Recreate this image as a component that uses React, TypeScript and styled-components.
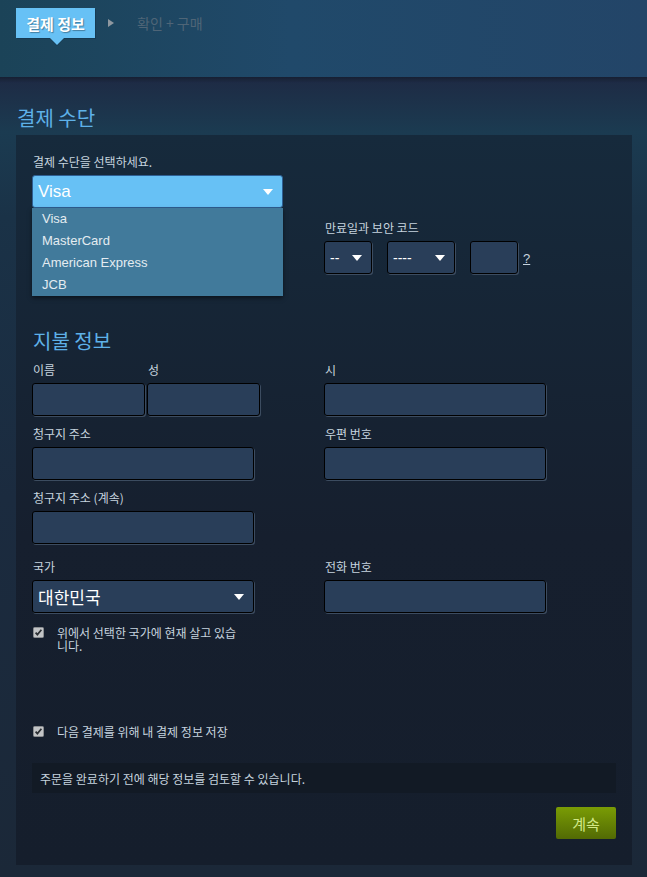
import { FC, ReactNode } from "react";
import styled, { createGlobalStyle } from "styled-components";

const KR = `"Noto Sans CJK KR", "Liberation Sans", Arial, sans-serif`;
const LATIN = `"Liberation Sans", Arial, "Noto Sans CJK KR", sans-serif`;

const GlobalStyle = createGlobalStyle`
    html, body {
        margin: 0;
        padding: 0;
        background: #1b2838;
        font-family: ${KR};
    }
    * {
        box-sizing: border-box;
    }
`;

const Header = styled.header`
    height: 77px;
    padding: 8px 16px 0;
    background: linear-gradient(90deg, #1b4358 0%, #20496a 45%, #234568 100%);
`;

const Steps = styled.div`
    display: flex;
    align-items: center;
`;

const ActiveStep = styled.div`
    position: relative;
    width: 79px;
    height: 30px;
    display: flex;
    align-items: center;
    justify-content: center;
    background: #67c1f5;
    color: #ffffff;
    font-size: 15px;
    font-weight: bold;
    text-shadow: 1px 1px 1px rgba(0, 0, 0, 0.35);
    box-shadow: 1px 1px 0 #163a52;

    &::after {
        content: "";
        position: absolute;
        left: 34px;
        bottom: -7px;
        border-left: 7px solid transparent;
        border-right: 7px solid transparent;
        border-top: 7px solid #67c1f5;
        filter: drop-shadow(0 1px 0 #163a52);
    }
`;

const StepArrow = styled.span`
    margin: 0 0 0 13px;
    width: 0;
    height: 0;
    border-top: 4.5px solid transparent;
    border-bottom: 4.5px solid transparent;
    border-left: 6px solid #8f98a0;
`;

const Step = styled.span`
    margin-left: 23px;
    color: #4f6577;
    font-size: 14px;
`;

const Page = styled.main`
    padding: 29px 15px 12px 16px;
    min-height: 800px;
    background:
        linear-gradient(180deg, rgba(0, 0, 0, 0.25) 0px, rgba(0, 0, 0, 0) 6px),
        linear-gradient(180deg, #1e2a44 0px, #1b3b51 55px, #1a3247 140px, #1b2b3f 420px, #1b2838 100%);
`;

const PageTitle = styled.h2`
    margin: 0 0 5px 1px;
    font-size: 20px;
    line-height: 24px;
    font-weight: normal;
    color: #5eb1e8;
`;

const Panel = styled.section`
    padding: 19px 16px 26px;
    background: linear-gradient(180deg, #162a3c 0%, #161f2e 55%, #151e2c 100%);
`;

const SubTitle = styled.h3`
    margin: 55px 0 9px 1px;
    font-size: 20px;
    line-height: 24px;
    font-weight: normal;
    color: #5eb1e8;
`;

const Row = styled.div<{ $gap?: number }>`
    display: grid;
    grid-template-columns: 292px 1fr;
    margin-top: ${({ $gap }) => $gap ?? 10}px;
`;

const Pair = styled.div`
    display: flex;
    gap: 2px;
`;

const FieldBox = styled.div`
    display: flex;
    flex-direction: column;
`;

const Label = styled.label`
    display: block;
    height: 16px;
    margin: 0 0 5px 1px;
    font-size: 12px;
    line-height: 16px;
    color: #c6d4df;
    white-space: nowrap;
`;

const Input = styled.div<{ $w: number }>`
    width: ${({ $w }) => $w}px;
    height: 33px;
    background: #293e59;
    border: 1px solid #000000;
    border-radius: 3px;
    box-shadow: 1px 1px 0 0 #3c4c60;
`;

const DownArrow = styled.span`
    width: 0;
    height: 0;
    border-left: 5px solid transparent;
    border-right: 5px solid transparent;
    border-top: 6px solid #ffffff;
`;

const Select = styled.div<{ $w: number; $active?: boolean; $small?: boolean }>`
    width: ${({ $w }) => $w}px;
    height: 33px;
    display: flex;
    align-items: center;
    justify-content: space-between;
    padding: 0 9px 0 5px;
    background: ${({ $active }) => ($active ? "#67c1f5" : "#293e59")};
    border: 1px solid ${({ $active }) => ($active ? "#2e5f93" : "#000000")};
    border-radius: 3px;
    box-shadow: 1px 1px 0 0 ${({ $active }) => ($active ? "transparent" : "#3c4c60")};
    color: #ffffff;
    font-size: ${({ $small }) => ($small ? "14px" : "17px")};
    font-family: ${({ $small }) => ($small ? LATIN : KR)};
`;

const SelectValue = styled.span<{ $latin?: boolean }>`
    font-family: ${({ $latin }) => ($latin ? LATIN : KR)};
    line-height: 20px;
`;

const SelectWrap = styled.div`
    position: relative;
    width: 251px;
`;

const Dropdown = styled.ul`
    position: absolute;
    left: 0;
    top: 33px;
    z-index: 2;
    width: 251px;
    margin: 0;
    padding: 0;
    list-style: none;
    background: #417a9b;
    box-shadow: 0 2px 4px rgba(0, 0, 0, 0.5);
`;

const Option = styled.li`
    height: 22px;
    padding: 0 10px;
    font-family: ${LATIN};
    font-size: 13px;
    line-height: 22px;
    color: #e4ecf1;
`;

const ExpiryRow = styled.div`
    display: flex;
    align-items: flex-end;
    gap: 15px;
`;

const Help = styled.span`
    margin-left: -10px;
    margin-bottom: 8px;
    font-family: ${LATIN};
    font-size: 13px;
    color: #c6d4df;
    text-decoration: underline;
`;

const CheckRow = styled.div<{ $gap: number }>`
    display: flex;
    align-items: flex-start;
    margin-top: ${({ $gap }) => $gap}px;
    padding-left: 1px;
`;

const CheckText = styled.span<{ $w?: number }>`
    width: ${({ $w }) => ($w ? `${$w}px` : "auto")};
    margin-left: 13px;
    font-size: 12px;
    line-height: 13px;
    color: #c6d4df;
`;

const Notice = styled.div`
    margin-top: 25px;
    height: 30px;
    padding: 0 8px;
    display: flex;
    align-items: center;
    background: #121a25;
    font-size: 12px;
    color: #c6d4df;
`;

const Actions = styled.div`
    display: flex;
    justify-content: flex-end;
    margin-top: 14px;
`;

const ContinueButton = styled.button`
    width: 60px;
    height: 32px;
    border: none;
    border-radius: 2px;
    background: linear-gradient(180deg, #7a9c05 0%, #526a04 100%);
    color: #d2e885;
    font-family: ${KR};
    font-size: 15px;
    cursor: pointer;
`;

const CheckBox: FC = () => (
    <svg width="11" height="11" viewBox="0 0 11 11" style={{ marginTop: 1, flex: "none" }}>
        <rect x="0.5" y="0.5" width="10" height="10" rx="1" fill="#c2c4c6" stroke="#8a8d90" />
        <path d="M2.6 5.6 L4.4 7.6 L8.4 2.8" fill="none" stroke="#2b2f33" strokeWidth="1.7" />
    </svg>
);

const Field: FC<{ label?: string; children: ReactNode }> = ({ label, children }) => (
    <FieldBox>
        <Label>{label}</Label>
        {children}
    </FieldBox>
);

const App: FC = () => (
    <>
        <GlobalStyle />
        <Header>
            <Steps>
                <ActiveStep>결제 정보</ActiveStep>
                <StepArrow />
                <Step>확인 + 구매</Step>
            </Steps>
        </Header>
        <Page>
            <PageTitle>결제 수단</PageTitle>
            <Panel>
                <Field label="결제 수단을 선택하세요.">
                    <SelectWrap>
                        <Select $w={251} $active>
                            <SelectValue $latin>Visa</SelectValue>
                            <DownArrow />
                        </Select>
                        <Dropdown>
                            <Option>Visa</Option>
                            <Option>MasterCard</Option>
                            <Option>American Express</Option>
                            <Option>JCB</Option>
                        </Dropdown>
                    </SelectWrap>
                </Field>

                <Row $gap={12}>
                    {/* card number field sits under the open dropdown */}
                    <Field>
                        <Input $w={222} />
                    </Field>
                    <Field label="만료일과 보안 코드">
                        <ExpiryRow>
                            <Select $w={48} $small>
                                <span>--</span>
                                <DownArrow />
                            </Select>
                            <Select $w={68} $small>
                                <span>----</span>
                                <DownArrow />
                            </Select>
                            <Input $w={48} />
                            <Help>?</Help>
                        </ExpiryRow>
                    </Field>
                </Row>

                <SubTitle>지불 정보</SubTitle>

                <Row $gap={0}>
                    <Pair>
                        <Field label="이름">
                            <Input $w={113} />
                        </Field>
                        <Field label="성">
                            <Input $w={113} />
                        </Field>
                    </Pair>
                    <Field label="시">
                        <Input $w={222} />
                    </Field>
                </Row>

                <Row>
                    <Field label="청구지 주소">
                        <Input $w={222} />
                    </Field>
                    <Field label="우편 번호">
                        <Input $w={222} />
                    </Field>
                </Row>

                <Row>
                    <Field label="청구지 주소 (계속)">
                        <Input $w={222} />
                    </Field>
                </Row>

                <Row $gap={15}>
                    <Field label="국가">
                        <Select $w={222}>
                            <SelectValue>대한민국</SelectValue>
                            <DownArrow />
                        </Select>
                    </Field>
                    <Field label="전화 번호">
                        <Input $w={222} />
                    </Field>
                </Row>

                <CheckRow $gap={13}>
                    <CheckBox />
                    <CheckText $w={180}>위에서 선택한 국가에 현재 살고 있습니다.</CheckText>
                </CheckRow>

                <CheckRow $gap={73}>
                    <CheckBox />
                    <CheckText>다음 결제를 위해 내 결제 정보 저장</CheckText>
                </CheckRow>

                <Notice>주문을 완료하기 전에 해당 정보를 검토할 수 있습니다.</Notice>

                <Actions>
                    <ContinueButton>계속</ContinueButton>
                </Actions>
            </Panel>
        </Page>
    </>
);

export default App;
